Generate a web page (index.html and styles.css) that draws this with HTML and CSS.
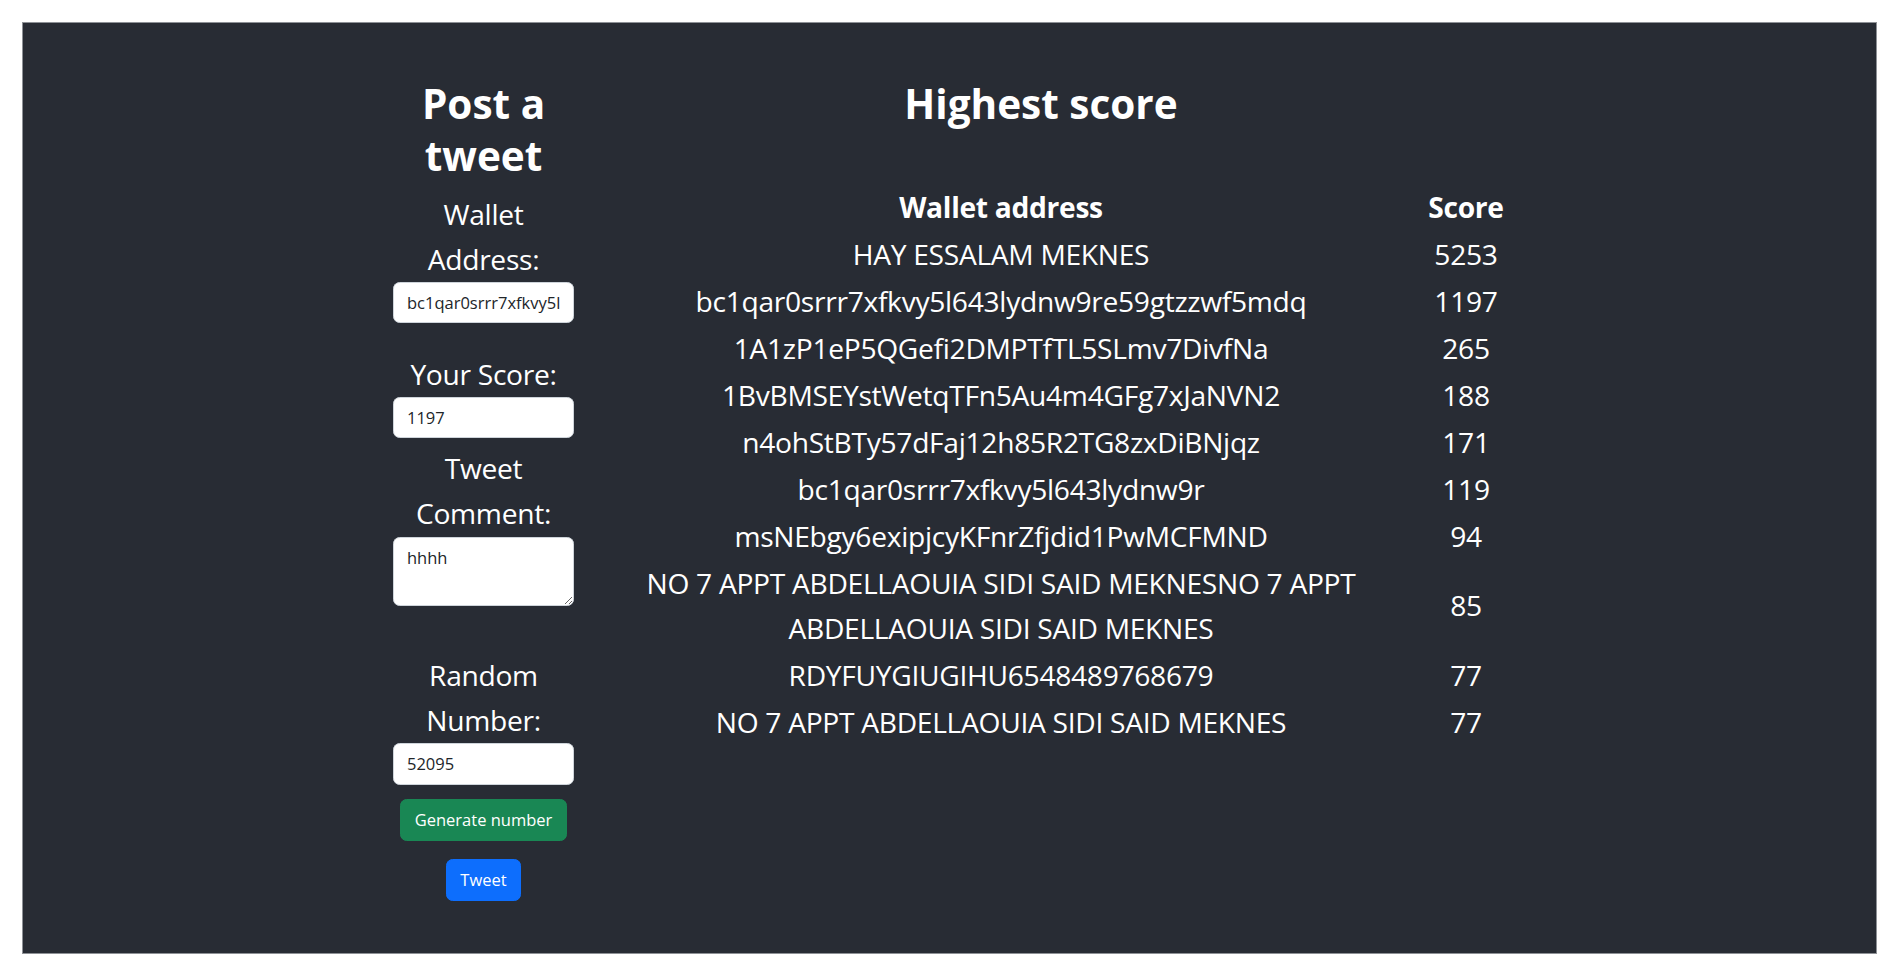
FILE: index.html
```html
<!DOCTYPE html>
<html lang="en">
<head>
<meta charset="utf-8">
<title>Post a tweet</title>
<link rel="stylesheet" href="styles.css">
</head>
<body>
<div class="frame">
  <div class="layout">
    <section class="post">
      <h1 class="title">Post a tweet</h1>
      <form class="post-form">
        <label class="field-label" for="wallet">Wallet Address:</label>
        <input class="field" id="wallet" type="text" value="bc1qar0srrr7xfkvy5l643lydnw9re59gtzzwf5mdq">
        <label class="field-label gap-score" for="score">Your Score:</label>
        <input class="field" id="score" type="text" value="1197">
        <label class="field-label gap-comment" for="comment">Tweet Comment:</label>
        <textarea class="field area" id="comment">hhhh</textarea>
        <label class="field-label gap-random" for="random">Random Number:</label>
        <input class="field" id="random" type="text" value="52095">
        <button class="btn btn-green" type="button">Generate number</button>
        <button class="btn btn-blue" type="button">Tweet</button>
      </form>
    </section>
    <section class="board">
      <h1 class="title">Highest score</h1>
      <table class="scores">
        <colgroup><col class="col-wallet"><col class="col-score"></colgroup>
        <thead>
          <tr><th>Wallet address</th><th>Score</th></tr>
        </thead>
        <tbody>
          <tr><td>HAY ESSALAM MEKNES</td><td>5253</td></tr>
          <tr><td>bc1qar0srrr7xfkvy5l643lydnw9re59gtzzwf5mdq</td><td>1197</td></tr>
          <tr><td>1A1zP1eP5QGefi2DMPTfTL5SLmv7DivfNa</td><td>265</td></tr>
          <tr><td>1BvBMSEYstWetqTFn5Au4m4GFg7xJaNVN2</td><td>188</td></tr>
          <tr><td>n4ohStBTy57dFaj12h85R2TG8zxDiBNjqz</td><td>171</td></tr>
          <tr><td>bc1qar0srrr7xfkvy5l643lydnw9r</td><td>119</td></tr>
          <tr><td>msNEbgy6exipjcyKFnrZfjdid1PwMCFMND</td><td>94</td></tr>
          <tr><td>NO 7 APPT ABDELLAOUIA SIDI SAID MEKNESNO 7 APPT ABDELLAOUIA SIDI SAID MEKNES</td><td>85</td></tr>
          <tr><td>RDYFUYGIUGIHU6548489768679</td><td>77</td></tr>
          <tr><td>NO 7 APPT ABDELLAOUIA SIDI SAID MEKNES</td><td>77</td></tr>
        </tbody>
      </table>
    </section>
  </div>
</div>
</body>
</html>
```

FILE: styles.css
```css
* {
  box-sizing: border-box;
}

html,
body {
  margin: 0;
  padding: 0;
}

body {
  background: #ffffff;
  font-family: "Open Sans", "Noto Sans", sans-serif;
  color: #ffffff;
}

.frame {
  margin: 22px;
  min-height: calc(100vh - 44px);
  border: 1px solid #8e9196;
  background: #282c34;
  padding-top: 55px;
}

.layout {
  display: flex;
  justify-content: center;
  gap: 2px;
}

.title {
  margin: 0 0 10.6px;
  font-size: 40.5px;
  line-height: 51.5px;
  font-weight: 700;
  text-align: center;
}

.post {
  width: 181px;
  text-align: center;
}

.post-form {
  display: flex;
  flex-direction: column;
  margin: 0;
}

.field-label {
  display: block;
  font-size: 28.2px;
  letter-spacing: -0.3px;
  line-height: 45px;
  font-weight: 400;
}

.gap-score {
  margin-top: 28.4px;
}

.gap-comment {
  margin-top: 7.4px;
}

.gap-random {
  margin-top: 47.4px;
}

.field {
  display: block;
  width: 100%;
  margin: 0;
  font-family: "Open Sans", "Noto Sans", sans-serif;
  font-size: 16.5px;
  line-height: 25.6px;
  color: #212529;
  background: #ffffff;
  border: 1px solid #ced4da;
  border-radius: 6.6px;
  padding: 7px 13px;
  text-align: left;
  outline: none;
}

.area {
  height: 69px;
  margin-top: 1.3px;
  resize: vertical;
}

.btn {
  align-self: center;
  font-family: "Open Sans", "Noto Sans", sans-serif;
  font-size: 16.5px;
  line-height: 25.6px;
  color: #ffffff;
  border: 1px solid transparent;
  border-radius: 6.6px;
  padding: 7px 13.5px;
  cursor: pointer;
}

.btn-green {
  background: #198754;
  border-color: #198754;
  margin-top: 14.6px;
}

.btn-blue {
  background: #0d6efd;
  border-color: #0d6efd;
  margin-top: 18.1px;
}

.board {
  width: 930px;
}

.board .title {
  margin-bottom: 54.3px;
}

.scores {
  width: 930px;
  table-layout: fixed;
  border-collapse: collapse;
  font-size: 28.2px;
  letter-spacing: -0.3px;
  line-height: 45px;
}

.col-wallet {
  width: 850px;
}

.col-score {
  width: 80px;
}

.scores th,
.scores td {
  padding: 1px;
  text-align: center;
  vertical-align: middle;
}

.scores th {
  font-weight: 700;
}

.scores td {
  font-weight: 400;
}
```
